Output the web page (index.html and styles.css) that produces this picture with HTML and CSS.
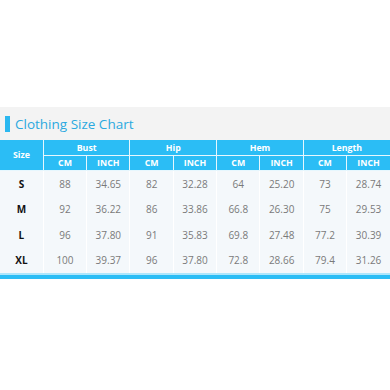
FILE: index.html
```html
<!DOCTYPE html>
<html>
<head>
<meta charset="utf-8">
<link rel="stylesheet" href="styles.css">
</head>
<body>
<div class="page">
  <div class="titlebar">
    <span class="marker"></span>
    <span class="title">Clothing Size Chart</span>
  </div>
  <table class="chart">
    <thead>
      <tr class="h1">
        <th rowspan="2" class="size-h">Size</th>
        <th colspan="2">Bust</th>
        <th colspan="2">Hip</th>
        <th colspan="2">Hem</th>
        <th colspan="2">Length</th>
      </tr>
      <tr class="h2">
        <th>CM</th><th>INCH</th>
        <th>CM</th><th>INCH</th>
        <th>CM</th><th>INCH</th>
        <th>CM</th><th>INCH</th>
      </tr>
    </thead>
    <tbody>
      <tr><td class="sz">S</td><td>88</td><td>34.65</td><td>82</td><td>32.28</td><td>64</td><td>25.20</td><td>73</td><td>28.74</td></tr>
      <tr><td class="sz">M</td><td>92</td><td>36.22</td><td>86</td><td>33.86</td><td>66.8</td><td>26.30</td><td>75</td><td>29.53</td></tr>
      <tr><td class="sz">L</td><td>96</td><td>37.80</td><td>91</td><td>35.83</td><td>69.8</td><td>27.48</td><td>77.2</td><td>30.39</td></tr>
      <tr><td class="sz">XL</td><td>100</td><td>39.37</td><td>96</td><td>37.80</td><td>72.8</td><td>28.66</td><td>79.4</td><td>31.26</td></tr>
    </tbody>
  </table>
  <div class="bottom-line"></div>
  <div class="bottom-bar"></div>
</div>
</body>
</html>
```
FILE: styles.css
```css
html, body {
  margin: 0;
  padding: 0;
  background: #ffffff;
}
.page {
  width: 390px;
  padding-top: 107px;
  font-family: "Open Sans", "Segoe UI", sans-serif;
}
.titlebar {
  height: 33px;
  background: #f3f3f3;
  display: flex;
  align-items: center;
  padding-left: 5px;
  box-sizing: border-box;
}
.marker {
  width: 5px;
  height: 16px;
  background: #2bb8f0;
  margin-right: 5px;
}
.title {
  font-family: "Open Sans", sans-serif;
  font-size: 13.5px;
  color: #2aa9e0;
  line-height: 20px;
}
.chart {
  width: 390px;
  border-collapse: collapse;
  table-layout: fixed;
}
.chart th {
  background: #2bbdf5;
  color: #ffffff;
  font-weight: 700;
  font-size: 8.8px;
  border: 1px solid #e6f7fe;
  padding: 0;
  text-align: center;
}
.chart tr:first-child th { border-top: none; }
.chart th:first-child { border-left: none; }
.chart tr.h2 th:last-child, .chart tr.h1 th:last-child { border-right: none; }
.h1 th { height: 15px; }
.h2 th { height: 14px; }
.size-h { font-size: 9.2px; }
.chart td {
  background: #f4f8fb;
  border-left: 1px solid #ffffff;
  border-right: 1px solid #ffffff;
  color: #7a7a7a;
  font-size: 10px;
  text-align: center;
  height: 25.5px;
  padding: 0;
}
.chart td:first-child { border-left: none; }
.chart td:last-child { border-right: none; }
.chart td.sz {
  color: #111111;
  font-weight: 700;
}
.bottom-line {
  height: 2px;
  background: #aee6fb;
}
.bottom-bar {
  height: 4px;
  background: #2bbdf5;
}
```
